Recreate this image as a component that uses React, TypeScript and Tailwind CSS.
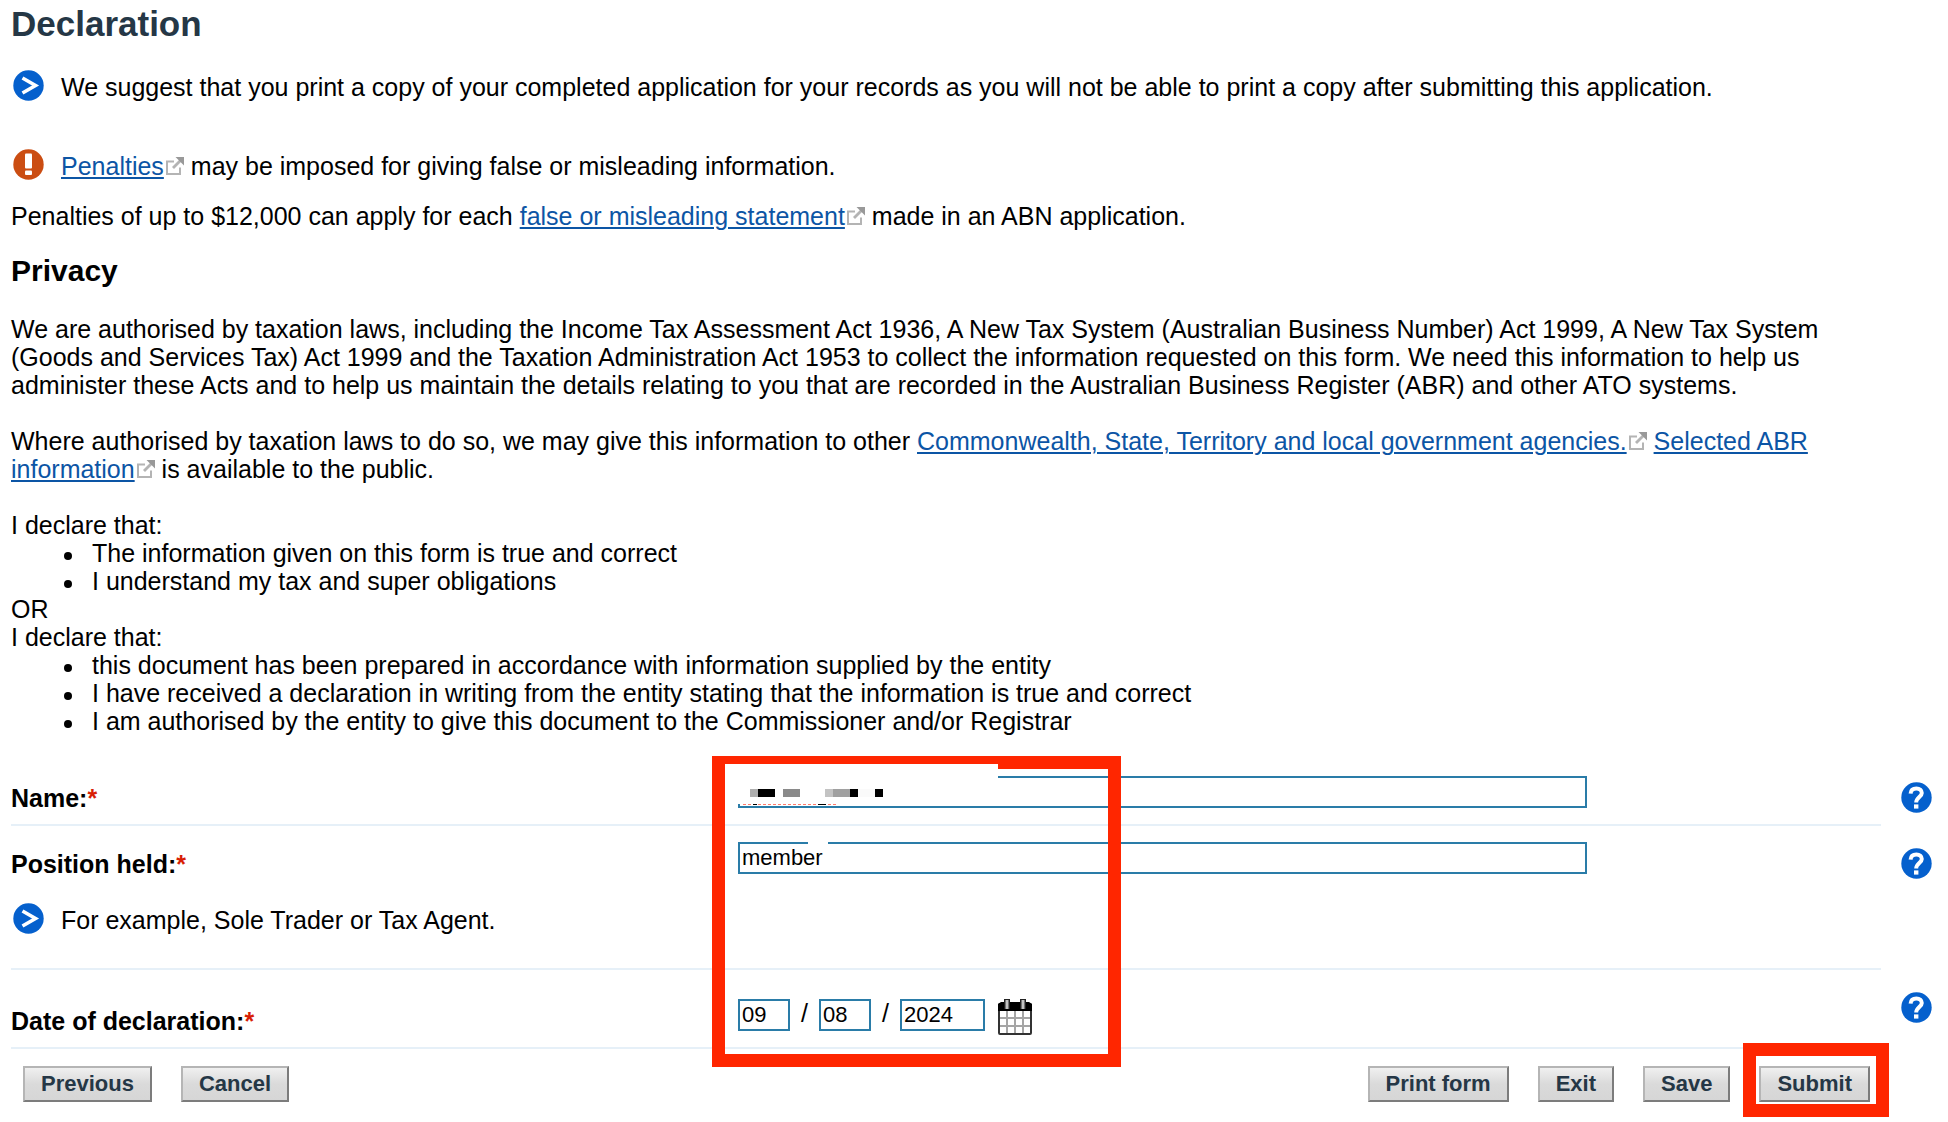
import React from "react";

const declarations = [
  {
    title: "I declare that:",
    items: [
      "The information given on this form is true and correct",
      "I understand my tax and super obligations",
    ],
  },
  {
    title: "I declare that:",
    items: [
      "this document has been prepared in accordance with information supplied by the entity",
      "I have received a declaration in writing from the entity stating that the information is true and correct",
      "I am authorised by the entity to give this document to the Commissioner and/or Registrar",
    ],
  },
];

const ArrowIcon: React.FC = () => (
  <svg viewBox="0 0 32 32" className="size-8 shrink-0" aria-hidden="true">
    <circle cx="15.5" cy="15.5" r="15.2" fill="#0560cd" />
    <path d="M9.5 8 L22.5 15.5 L9.5 23" fill="none" stroke="#fff" strokeWidth="3.6" />
  </svg>
);

const WarningIcon: React.FC = () => (
  <svg viewBox="0 0 32 32" className="size-8 shrink-0" aria-hidden="true">
    <circle cx="15.5" cy="15.5" r="15.2" fill="#cb4d12" />
    <rect x="12" y="4.5" width="7" height="15" rx="1" fill="#fff" />
    <rect x="12" y="21.5" width="7" height="4.5" rx="1" fill="#fff" />
  </svg>
);

const HelpIcon: React.FC = () => (
  <svg viewBox="0 0 32 32" className="size-8" aria-hidden="true">
    <circle cx="15.5" cy="15.5" r="15.2" fill="#0560cd" />
    <path
      d="M9.6 11.6 C9.8 8 12.2 6.4 15.4 6.4 C18.8 6.4 20.8 8.4 20.8 11 C20.8 14.8 15.2 15.4 15.2 20.4"
      fill="none"
      stroke="#fff"
      strokeWidth="4"
    />
    <rect x="13" y="22.4" width="4.4" height="4.2" fill="#fff" />
  </svg>
);

const ExternalIcon: React.FC = () => (
  <svg viewBox="0 0 18 18" className="ml-0.5 inline-block size-[18px] align-baseline" aria-hidden="true">
    <path d="M8 4.5 H1 V17 H14 V10.5" fill="none" stroke="#b4b4b4" strokeWidth="2" />
    <path d="M7 11 L15 3" stroke="#b4b4b4" strokeWidth="2.8" />
    <path d="M9.5 0 H18 V8.5 L15.5 6 L12 2.5 Z" fill="#999" />
  </svg>
);

const CalendarIcon: React.FC = () => (
  <svg viewBox="0 0 34 36" className="h-9 w-[34px]" aria-hidden="true">
    <rect x="1" y="5" width="32" height="30" rx="1" fill="#fff" stroke="#333" strokeWidth="2" />
    <path d="M0 12 V5 L3 3 H31 L34 5 V12 Z" fill="#000" />
    <path d="M9 12 V34 M17 12 V34 M25 12 V34 M2 19 H32 M2 27 H32" stroke="#a5a5a5" strokeWidth="2" />
    <path d="M6 0 H12 V10 H6 Z M22 0 H28 V10 H22 Z" fill="#222" />
    <path d="M9 1 V10 M25 1 V10" stroke="#c4c4c4" strokeWidth="3" />
  </svg>
);

const ExternalLink: React.FC<{ children: React.ReactNode }> = ({ children }) => (
  <>
    <a href="#" className="text-[#0c55a5] underline decoration-2 underline-offset-2">
      {children}
    </a>
    <ExternalIcon />
  </>
);

const FormButton: React.FC<{ children: React.ReactNode }> = ({ children }) => (
  <button
    type="button"
    className="h-9 border-2 border-t-[#b5b5b5] border-l-[#b5b5b5] border-r-[#7c7c7c] border-b-[#7c7c7c] bg-linear-to-b from-[#f0f0f0] via-[#dadada] to-[#d6d6d6] px-4 text-[22px] leading-8 font-bold text-[#253746]"
  >
    {children}
  </button>
);

const Required: React.FC = () => <span className="text-[#d81e05]">*</span>;

type RowProps = {
  label: string;
  htmlFor: string;
  hint?: React.ReactNode;
  tall?: boolean;
  children: React.ReactNode;
};

const FormRow: React.FC<RowProps> = ({ label, htmlFor, hint, tall, children }) => (
  <div className="flex">
    <div className="grid flex-1 grid-cols-[727px_1fr] border-b-2 border-[#e6f0f8]">
      <div className={tall ? "pt-[37px] pb-3" : "pt-6 pb-3"}>
        <label htmlFor={htmlFor} className="block font-bold">
          {label}
          <Required />
        </label>
        {hint}
      </div>
      <div className={tall ? "pt-[29px]" : "pt-4"}>{children}</div>
    </div>
    <div className="w-[67px] pt-[22px] pl-5">
      <button type="button" aria-label={`Help: ${label}`} className="block">
        <HelpIcon />
      </button>
    </div>
  </div>
);

const inputClass = "block h-8 border-2 border-[#2a7ca8] bg-white px-0.5 text-[22px] leading-7";

// Blocks of the blurred-out name, left to right
const maskBlocks = [
  "w-2 bg-[#aeaeae]",
  "w-[17px] bg-black",
  "w-2",
  "w-[17px] bg-[#8a8a8a]",
  "w-[25px]",
  "w-2 bg-[#c3c3c3]",
  "w-[17px] bg-[#a0a0a0]",
  "w-2 bg-black",
  "w-[17px] bg-[#fafafa]",
  "w-2 bg-black",
];

const App: React.FC = () => {
  return (
    <main className="bg-white pt-1 pb-[19px] pl-[11px] font-['Liberation_Sans',Arial,sans-serif] text-[25px] leading-7 text-black">
      <h1 className="text-[35px] leading-10 font-bold text-[#253746]">Declaration</h1>

      <div className="mt-[26px] flex gap-4 pl-0.5">
        <ArrowIcon />
        <p className="pt-[3px]">
          We suggest that you print a copy of your completed application for your records as you will not be able
          to print a copy after submitting this application.
        </p>
      </div>

      <div className="mt-[47px] flex gap-4 pl-0.5">
        <WarningIcon />
        <p className="pt-[3px]">
          <ExternalLink>Penalties</ExternalLink> may be imposed for giving false or misleading information.
        </p>
      </div>

      <p className="mt-[21px]">
        Penalties of up to $12,000 can apply for each <ExternalLink>false or misleading statement</ExternalLink> made
        in an ABN application.
      </p>

      <h2 className="mt-6 text-[30px] leading-[34px] font-bold">Privacy</h2>

      <div className="mt-[27px] space-y-7 pr-[67px]">
        <p>
          We are authorised by taxation laws, including the Income Tax Assessment Act 1936, A New Tax System
          (Australian Business Number) Act 1999, A New Tax System (Goods and Services Tax) Act 1999 and the Taxation
          Administration Act 1953 to collect the information requested on this form. We need this information to help
          us administer these Acts and to help us maintain the details relating to you that are recorded in the
          Australian Business Register (ABR) and other ATO systems.
        </p>
        <p>
          Where authorised by taxation laws to do so, we may give this information to other{" "}
          <ExternalLink>Commonwealth, State, Territory and local government agencies.</ExternalLink>{" "}
          <ExternalLink>Selected ABR information</ExternalLink> is available to the public.
        </p>
        <div>
          {declarations.map((group, index) => (
            <div key={index}>
              {index > 0 && <p>OR</p>}
              <p>{group.title}</p>
              <ul className="pl-[53px]">
                {group.items.map((item) => (
                  <li key={item} className="flex gap-5">
                    <span className="mt-[13px] size-2 shrink-0 rounded-full bg-black" />
                    {item}
                  </li>
                ))}
              </ul>
            </div>
          ))}
        </div>
      </div>

      <form className="relative mt-[25px]">
        <FormRow label="Name:" htmlFor="name">
          <input id="name" type="text" className={`${inputClass} w-full max-w-[849px]`} />
        </FormRow>
        <FormRow
          label="Position held:"
          htmlFor="position"
          hint={
            <div className="mt-[25px] mb-[21px] flex gap-4 pl-0.5">
              <ArrowIcon />
              <p className="pt-[3px]">For example, Sole Trader or Tax Agent.</p>
            </div>
          }
        >
          <div className="relative">
            <input
              id="position"
              type="text"
              defaultValue="member"
              className={`${inputClass} w-full max-w-[849px]`}
            />
            <span className="absolute -top-px left-[70px] h-1 w-5 bg-white" />
          </div>
        </FormRow>
        <FormRow label="Date of declaration:" htmlFor="day" tall>
          <div className="flex items-start">
            <input id="day" aria-label="Day" defaultValue="09" className={`${inputClass} w-[52px]`} />
            <span className="w-[29px] text-center">/</span>
            <input aria-label="Month" defaultValue="08" className={`${inputClass} w-[52px]`} />
            <span className="w-[29px] text-center">/</span>
            <input aria-label="Year" defaultValue="2024" className={`${inputClass} w-[85px]`} />
            <button type="button" aria-label="Choose date" className="ml-[13px]">
              <CalendarIcon />
            </button>
          </div>
        </FormRow>

        {/* Highlight around the fields, with the name masked out */}
        <div className="pointer-events-none absolute -top-1 left-[701px] h-[311px] w-[409px] border-13 border-[#ff2600]">
          <div className="absolute -top-[5px] left-0 h-10 w-[273px] bg-white">
            <div className="mt-[25px] ml-[25px] flex h-2">
              {maskBlocks.map((block, index) => (
                <span key={index} className={block} />
              ))}
            </div>
            <div className="mt-[7px] ml-[18px] flex w-[93px] justify-between border-t border-dashed border-[#ff7a6b] px-2.5">
              <span className="-mt-px h-px w-1 bg-black" />
              <span className="-mt-px h-px w-2 bg-black" />
            </div>
          </div>
        </div>

        <div className="flex justify-between pt-[17px] pr-[78px] pl-3">
          <div className="flex gap-[29px]">
            <FormButton>Previous</FormButton>
            <FormButton>Cancel</FormButton>
          </div>
          <div className="flex gap-[29px]">
            <FormButton>Print form</FormButton>
            <FormButton>Exit</FormButton>
            <FormButton>Save</FormButton>
            <div className="relative">
              <FormButton>Submit</FormButton>
              <div className="pointer-events-none absolute -top-[23px] -right-[19px] -left-4 h-[74px] border-13 border-[#ff2600]" />
            </div>
          </div>
        </div>
      </form>
    </main>
  );
};

export default App;
